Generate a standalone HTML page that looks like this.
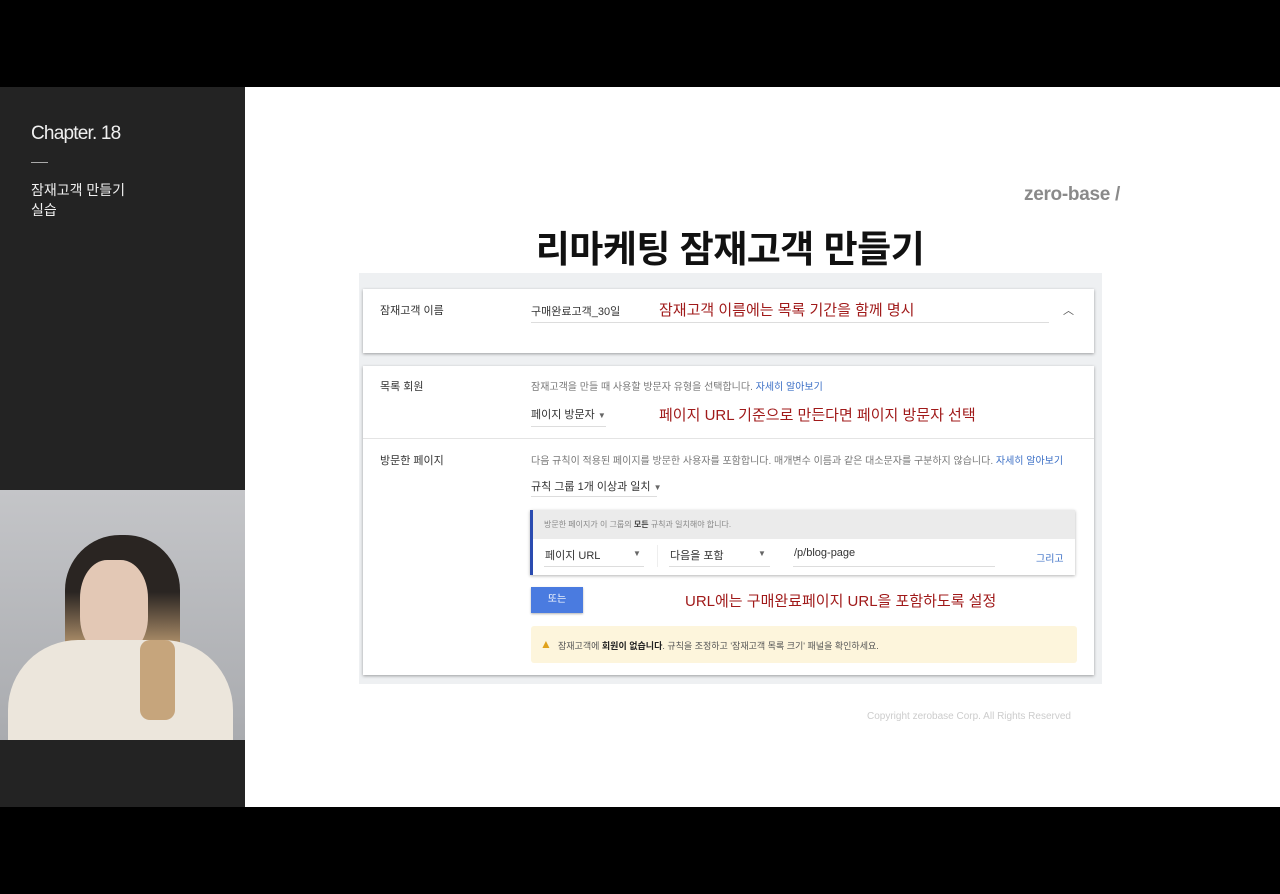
<!DOCTYPE html><html><head><meta charset="utf-8"><style>
*{margin:0;padding:0;box-sizing:border-box}
body{width:1280px;height:894px;background:#000;position:relative;overflow:hidden;font-family:"Liberation Sans","Noto Sans CJK KR",sans-serif}
.a{position:absolute}
.g{color:#777;font-size:10px}
.lbl{font-size:11px;color:#333}
.red{color:#a01a1a;font-size:15px}
.ul{border-bottom:1px solid #ddd}
</style></head><body>
<div class="a" style="left:0;top:87px;width:245px;height:720px;background:#232323"></div>
<div class="a" style="left:31px;top:123px;color:#f0f0f0;font-size:19px;letter-spacing:-0.8px">Chapter. 18</div>
<div class="a" style="left:31px;top:162px;width:17px;height:1px;background:#aaa"></div>
<div class="a" style="left:31px;top:180px;color:#f0f0f0;font-size:14px;line-height:20px">잠재고객 만들기<br>실습</div>
<div class="a" style="left:0;top:490px;width:245px;height:250px;background:linear-gradient(#c4c5c8,#a9abaf);overflow:hidden">
 <div class="a" style="left:65px;top:45px;width:115px;height:190px;border-radius:55px 55px 20px 20px;background:linear-gradient(#2a2522 30%,#b99870 60%,#c9a880)"></div>
 <div class="a" style="left:80px;top:70px;width:68px;height:95px;border-radius:40%;background:#e3c8b5"></div>
 <div class="a" style="left:8px;top:150px;width:225px;height:110px;border-radius:70px 70px 0 0;background:#ece6dc"></div>
 <div class="a" style="left:140px;top:150px;width:35px;height:80px;background:#c6a57c;border-radius:10px"></div>
</div>
<div class="a" style="left:245px;top:87px;width:1035px;height:720px;background:#fff"></div>
<div class="a" style="left:1024px;top:184px;color:#8a8a8a;font-size:19px;font-weight:bold;letter-spacing:-0.3px">zero-base /</div>
<div class="a" style="left:0;width:1460px;top:219px;text-align:center;font-size:37px;font-weight:bold;color:#111;letter-spacing:-0.5px">리마케팅 잠재고객 만들기</div>
<div class="a" style="left:359px;top:273px;width:743px;height:411px;background:#eef0f2"></div>
<div class="a" style="left:363px;top:289px;width:731px;height:64px;background:#fff;box-shadow:0 1px 3px rgba(0,0,0,.35)"></div>
<div class="a lbl" style="left:380px;top:302px">잠재고객 이름</div>
<div class="a ul" style="left:531px;top:300px;width:518px;height:23px"></div>
<div class="a lbl" style="left:531px;top:303px">구매완료고객_30일</div>
<div class="a red" style="left:659px;top:299px">잠재고객 이름에는 목록 기간을 함께 명시</div>
<div class="a" style="left:1063px;top:302px;font-size:11px;color:#555">︿</div>
<div class="a" style="left:363px;top:366px;width:731px;height:309px;background:#fff;box-shadow:0 1px 3px rgba(0,0,0,.35)"></div>
<div class="a lbl" style="left:380px;top:378px">목록 회원</div>
<div class="a g" style="left:531px;top:378px">잠재고객을 만들 때 사용할 방문자 유형을 선택합니다. <span style="color:#3b6fc6">자세히 알아보기</span></div>
<div class="a ul" style="left:531px;top:403px;width:75px;height:24px"></div>
<div class="a lbl" style="left:531px;top:406px">페이지 방문자 <span style="font-size:8px;color:#666">▼</span></div>
<div class="a red" style="left:659px;top:404px">페이지 URL 기준으로 만든다면 페이지 방문자 선택</div>
<div class="a" style="left:363px;top:438px;width:731px;height:1px;background:#e4e4e4"></div>
<div class="a lbl" style="left:380px;top:452px">방문한 페이지</div>
<div class="a g" style="left:531px;top:452px">다음 규칙이 적용된 페이지를 방문한 사용자를 포함합니다. 매개변수 이름과 같은 대소문자를 구분하지 않습니다. <span style="color:#3b6fc6">자세히 알아보기</span></div>
<div class="a ul" style="left:531px;top:475px;width:126px;height:22px"></div>
<div class="a lbl" style="left:531px;top:478px">규칙 그룹 1개 이상과 일치 <span style="font-size:8px;color:#666">▼</span></div>
<div class="a" style="left:530px;top:510px;width:545px;height:65px;background:#fff;box-shadow:0 1px 3px rgba(0,0,0,.3);border-left:3px solid #2a4bb0"></div>
<div class="a" style="left:533px;top:510px;width:542px;height:29px;background:#ebebeb"></div>
<div class="a" style="left:544px;top:519px;font-size:8px;color:#888">방문한 페이지가 이 그룹의 <b style="color:#444">모든</b> 규칙과 일치해야 합니다.</div>
<div class="a ul" style="left:544px;top:545px;width:100px;height:22px"></div>
<div class="a lbl" style="left:545px;top:547px">페이지 URL<span style="position:absolute;left:88px;font-size:8px;color:#666;top:2px">▼</span></div>
<div class="a" style="left:657px;top:545px;width:1px;height:22px;background:#eee"></div>
<div class="a ul" style="left:669px;top:545px;width:101px;height:22px"></div>
<div class="a lbl" style="left:670px;top:547px">다음을 포함<span style="position:absolute;left:88px;font-size:8px;color:#666;top:2px">▼</span></div>
<div class="a ul" style="left:793px;top:545px;width:202px;height:22px"></div>
<div class="a lbl" style="left:794px;top:547px">/p/blog-page</div>
<div class="a" style="left:1036px;top:550px;font-size:10px;color:#3b6fc6">그리고</div>
<div class="a" style="left:531px;top:587px;width:52px;height:26px;background:#4a7be0;box-shadow:0 1px 2px rgba(0,0,0,.3);color:#fff;font-size:10px;text-align:center;line-height:26px">또는</div>
<div class="a red" style="left:685px;top:590px">URL에는 구매완료페이지 URL을 포함하도록 설정</div>
<div class="a" style="left:531px;top:626px;width:546px;height:37px;background:#fdf5dc;border-radius:3px"></div>
<div class="a" style="left:540px;top:637px;font-size:12px;color:#e0a21c">▲</div>
<div class="a" style="left:558px;top:639px;font-size:9px;color:#555">잠재고객에 <b style="color:#222">회원이 없습니다</b>. 규칙을 조정하고 '잠재고객 목록 크기' 패널을 확인하세요.</div>
<div class="a" style="left:867px;top:711px;font-size:10px;color:#ccc">Copyright zerobase Corp. All Rights Reserved</div>
</body></html>
